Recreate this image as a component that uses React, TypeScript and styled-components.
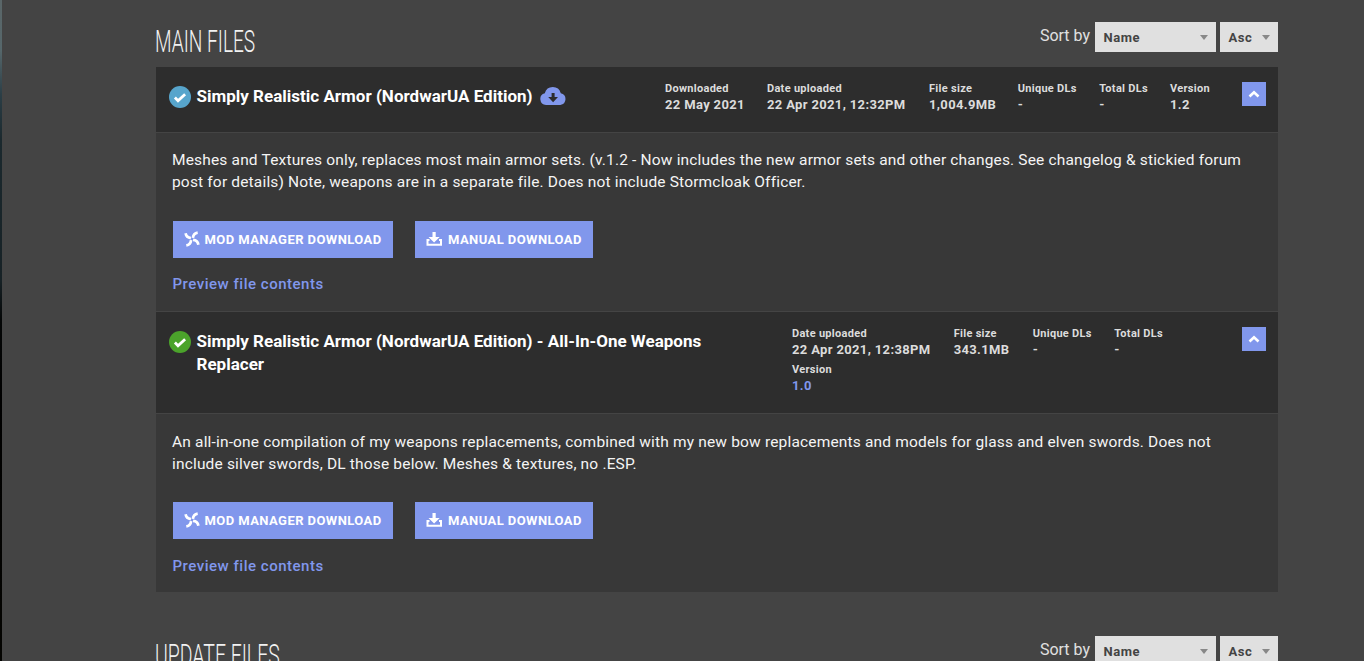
import React from 'react';
import styled, { createGlobalStyle } from 'styled-components';

const GlobalStyle = createGlobalStyle`
  * { box-sizing: border-box; }
  html, body { margin: 0; height: 100%; overflow: hidden; background: #444444; }
  body { font-family: Roboto, "Liberation Sans", sans-serif; color: #e0e0e0; }
`;

const Page = styled.div`
  display: flex;
  height: 661px;
  overflow: hidden;
  background: #444444;
`;

const Backdrop = styled.div`
  flex: 0 0 2px;
  background: linear-gradient(#5a6668 0, #56676b 50px, #2b3e46 95px, #1b292e 140px, #172226 280px, #050707 320px, #000 400px, #050502 661px);
`;

const Content = styled.main`
  width: 1122px;
  margin-left: 154px;
`;

const SectionHead = styled.div`
  display: flex;
  justify-content: space-between;
  align-items: flex-start;
  height: 67px;
  padding-top: 22px;
`;

const Heading = styled.h2<{ $scale: number }>`
  margin: 2px 0 0 -1px;
  font-size: 31px;
  line-height: 36px;
  font-weight: 300;
  text-transform: uppercase;
  white-space: nowrap;
  color: #f2f2f2;
  transform: scaleX(${p => p.$scale});
  transform-origin: left center;
`;

const Sort = styled.div`
  display: flex;
  gap: 4px;
`;

const SortLabel = styled.span`
  font-size: 16px;
  line-height: 28px;
  color: #e0e0e0;
  margin-right: 1px;
`;

const Select = styled.div<{ $width: number }>`
  display: flex;
  align-items: center;
  justify-content: space-between;
  width: ${p => p.$width}px;
  height: 30px;
  padding: 1px 8px 0 8.5px;
  background: #e0e0e0;
  color: #444444;
  font-size: 13px;
  font-weight: 700;
  letter-spacing: 0.5px;
  &::after {
    content: '';
    border: 4.5px solid transparent;
    border-top: 5px solid #888888;
    border-bottom: 0;
  }
`;

const ItemHead = styled.div<{ $height: number }>`
  display: flex;
  align-items: flex-start;
  height: ${p => p.$height}px;
  padding: 15px 12px 0 13px;
  background: #2d2d2d;
`;

const Status = styled.svg`
  flex: none;
  width: 22px;
  height: 22px;
  margin-top: 4px;
`;

const Title = styled.h3`
  flex: 1;
  margin: 3px 0 0 5.5px;
  padding-right: 30px;
  font-size: 17px;
  line-height: 23px;
  font-weight: 700;
  letter-spacing: 0.01px;
  color: #fff;
`;

const Cloud = styled.svg`
  width: 26px;
  height: 18px;
  margin-left: 7px;
  vertical-align: -3px;
`;

const Stats = styled.div<{ $width: number }>`
  display: flex;
  flex-wrap: wrap;
  align-content: flex-start;
  width: ${p => p.$width}px;
`;

const Stat = styled.div<{ $width: number }>`
  width: ${p => p.$width}px;
  height: 36px;
  white-space: nowrap;
`;

const StatName = styled.div`
  font-size: 11px;
  line-height: 13px;
  font-weight: 700;
  letter-spacing: 0.29px;
  color: #dcdcdc;
`;

const StatValue = styled.div<{ $link?: boolean }>`
  margin-top: 2px;
  font-size: 13px;
  line-height: 16px;
  font-weight: 700;
  letter-spacing: 0.35px;
  color: ${p => (p.$link ? '#8197ec' : '#dcdcdc')};
`;

const Toggle = styled.button`
  display: flex;
  align-items: center;
  justify-content: center;
  flex: none;
  width: 24px;
  height: 24px;
  padding: 0;
  border: 0;
  background: #8197ec;
`;

const ItemBody = styled.div<{ $height: number }>`
  height: ${p => p.$height}px;
  padding: 16px 17px 0 16px;
  border-top: 1px solid #444444;
  border-bottom: 1px solid #444444;
  background: #383838;
  &:last-child { border-bottom-color: #444444; }
`;

const Description = styled.p<{ $drop: number }>`
  margin: ${p => p.$drop}px 0 0;
  font-size: 15.5px;
  line-height: 22px;
  letter-spacing: 0.17px;
  color: #f4f4f4;
`;

const Actions = styled.div<{ $drop: number }>`
  display: flex;
  gap: 22px;
  margin: ${p => 28 - p.$drop}px 0 ${p => 16 + p.$drop}px 1px;
`;

const Action = styled.button<{ $width: number }>`
  display: flex;
  align-items: center;
  gap: 5px;
  width: ${p => p.$width}px;
  height: 37px;
  padding: 0 0 0 10.5px;
  border: 0;
  background: #8197ec;
  color: #fff;
  font-family: inherit;
  font-size: 13px;
  font-weight: 700;
  letter-spacing: 0.43px;
  white-space: nowrap;
  text-transform: uppercase;
  svg { margin-top: -1px; }
`;

const Preview = styled.a`
  display: block;
  margin-left: 0.5px;
  font-size: 15px;
  line-height: 20px;
  font-weight: 500;
  letter-spacing: 0.52px;
  color: #8197ec;
`;

const Gap = styled.div`
  height: 21px;
`;

const Check = ({ color }: { color: string }) => (
  <Status viewBox="0 0 22 22">
    <circle cx="11" cy="11" r="11" fill={color} />
    <path d="M5.9 11.6 9 14.7 16.1 8.2" fill="none" stroke="#fff" strokeWidth="2.8" />
  </Status>
);

const DownloadedCloud = () => (
  <Cloud viewBox="0 0 26 18">
    <path d="M6 18a6 6 0 0 1-1.2-11.8A8.3 8.3 0 0 1 20.8 6.2 6 6 0 0 1 20.3 18z" fill="#8197ec" />
    <path d="M11.6 6h3v4H18l-4.9 5.2L8.2 10h3.4z" fill="#2d2d2d" />
  </Cloud>
);

const ManagerIcon = () => (
  <svg width="16" height="16" viewBox="0 0 16 16" fill="none" stroke="#fff" strokeWidth="2.7">
    <path d="M8.9 6.9C9.2 4 10.5 2.1 13.7 1.6" />
    <path d="M9.1 8.9c2.9.3 4.8 1.6 5.3 4.8" />
    <path d="M7.1 9.1c-.3 2.9-1.6 4.8-4.8 5.3" />
    <path d="M6.9 7.1C4 6.8 2.1 5.5 1.6 2.3" />
  </svg>
);

const TrayIcon = () => (
  <svg width="17.5" height="16" viewBox="0 0 17.5 16">
    <path d="M6.5 1h3.200v5h4L8.100 11.500 2.500 6h4z" fill="#fff" />
    <path d="M3.500 9H1.500v4.800h13.500V9h-2" fill="none" stroke="#fff" strokeWidth="2" />
  </svg>
);

const SortBar = () => (
  <Sort>
    <SortLabel>Sort by</SortLabel>
    <Select $width={121}>Name</Select>
    <Select $width={58}>Asc</Select>
  </Sort>
);

type StatData = { name: string; value: string; width: number; link?: boolean };

type FileProps = {
  title: string;
  text: string;
  color: string;
  downloaded?: boolean;
  headHeight: number;
  bodyHeight: number;
  drop?: number;
  statsWidth: number;
  stats: StatData[];
};

const FileItem = ({ title, text, color, downloaded, headHeight, bodyHeight, drop = 0, statsWidth, stats }: FileProps) => (
  <section>
    <ItemHead $height={headHeight}>
      <Check color={color} />
      <Title>
        {title}
        {downloaded && <DownloadedCloud />}
      </Title>
      <Stats $width={statsWidth}>
        {stats.map(s => (
          <Stat key={s.name} $width={s.width}>
            <StatName>{s.name}</StatName>
            <StatValue $link={s.link}>{s.value}</StatValue>
          </Stat>
        ))}
      </Stats>
      <Toggle>
        <svg width="12" height="8" viewBox="0 0 12 8">
          <path d="M1.5 6.5 6 2.2l4.5 4.3" fill="none" stroke="#fff" strokeWidth="2.6" />
        </svg>
      </Toggle>
    </ItemHead>
    <ItemBody $height={bodyHeight}>
      <Description $drop={drop}>{text}</Description>
      <Actions $drop={drop}>
        <Action $width={220}><ManagerIcon />Mod manager download</Action>
        <Action $width={178}><TrayIcon />Manual download</Action>
      </Actions>
      <Preview>Preview file contents</Preview>
    </ItemBody>
  </section>
);

export default function App() {
  return (
    <Page>
      <GlobalStyle />
      <Backdrop />
      <Content>
        <SectionHead>
          <Heading $scale={0.617}>Main files</Heading>
          <SortBar />
        </SectionHead>
        <FileItem
          title="Simply Realistic Armor (NordwarUA Edition)"
          text="Meshes and Textures only, replaces most main armor sets. (v.1.2 - Now includes the new armor sets and other changes. See changelog & stickied forum post for details) Note, weapons are in a separate file. Does not include Stormcloak Officer."
          color="#57a5cc"
          downloaded
          headHeight={65}
          bodyHeight={180}
          statsWidth={577}
          stats={[
            { name: 'Downloaded', value: '22 May 2021', width: 102 },
            { name: 'Date uploaded', value: '22 Apr 2021, 12:32PM', width: 162 },
            { name: 'File size', value: '1,004.9MB', width: 88.7 },
            { name: 'Unique DLs', value: '-', width: 81.5 },
            { name: 'Total DLs', value: '-', width: 70.8 },
            { name: 'Version', value: '1.2', width: 60 },
          ]}
        />
        <FileItem
          title="Simply Realistic Armor (NordwarUA Edition) - All-In-One Weapons Replacer"
          text="An all-in-one compilation of my weapons replacements, combined with my new bow replacements and models for glass and elven swords. Does not include silver swords, DL those below. Meshes & textures, no .ESP."
          color="#4ba32b"
          headHeight={101}
          bodyHeight={180}
          drop={1}
          statsWidth={450}
          stats={[
            { name: 'Date uploaded', value: '22 Apr 2021, 12:38PM', width: 161.7 },
            { name: 'File size', value: '343.1MB', width: 79 },
            { name: 'Unique DLs', value: '-', width: 81.5 },
            { name: 'Total DLs', value: '-', width: 70.8 },
            { name: 'Version', value: '1.0', width: 60, link: true },
          ]}
        />
        <Gap />
        <SectionHead>
          <Heading $scale={0.628}>Update files</Heading>
          <SortBar />
        </SectionHead>
      </Content>
    </Page>
  );
}
